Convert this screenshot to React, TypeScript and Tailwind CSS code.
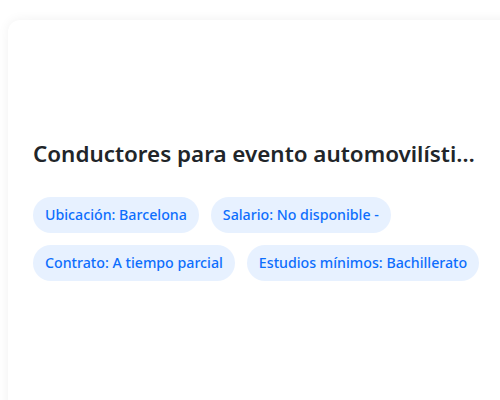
const tags = [
  "Ubicación: Barcelona",
  "Salario: No disponible -",
  "Contrato: A tiempo parcial",
  "Estudios mínimos: Bachillerato",
];

export default function App() {
  return (
    <div
      className="h-[400px] w-[500px] overflow-hidden bg-white pl-2 pt-5"
      style={{ fontFamily: '"Noto Sans", "Open Sans", sans-serif' }}
    >
      <div className="h-[400px] w-[520px] rounded-xl bg-white shadow-[0_0_12px_rgba(0,0,0,0.06)]">
        <div className="w-[500px] px-[25px] pt-[119px]">
          <h2 className="truncate text-[22.4px] font-semibold leading-[30px] text-[#212529]">
            Conductores para evento automovilístico internacional
          </h2>
          <div className="mt-[28px] flex flex-wrap gap-3">
            {tags.map((t) => (
              <span
                key={t}
                className="rounded-full bg-[#e7f1ff] px-3 py-[8px] text-[14.2px] font-medium leading-[20px] text-[#0d6efd]"
              >
                {t}
              </span>
            ))}
          </div>
        </div>
      </div>
    </div>
  );
}
